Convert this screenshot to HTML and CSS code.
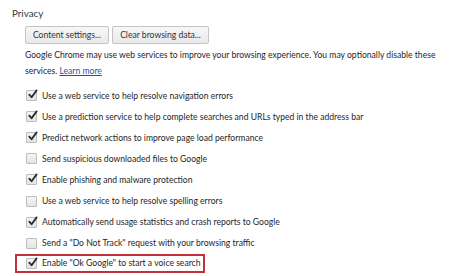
FILE: index.html
```html
<!DOCTYPE html>
<html>
<head>
<meta charset="utf-8">
<link rel="stylesheet" href="styles.css">
</head>
<body>
<section class="privacy">
  <h3 class="title">Privacy</h3>
  <div class="indent">
    <div class="buttons">
      <button class="btn btn-content">Content settings...</button>
      <button class="btn btn-clear">Clear browsing data...</button>
    </div>
    <p class="desc">Google Chrome may use web services to improve your browsing experience. You may optionally disable these services. <a class="link" href="#">Learn more</a></p>
    <ul class="options">
      <li class="opt"><span class="cb on"><svg viewBox="0 0 12 12"><path d="M2.5 6.2 L5 9 L10.5 1.5" /></svg></span>Use a web service to help resolve navigation errors</li>
      <li class="opt"><span class="cb on"><svg viewBox="0 0 12 12"><path d="M2.5 6.2 L5 9 L10.5 1.5" /></svg></span>Use a prediction service to help complete searches and URLs typed in the address bar</li>
      <li class="opt"><span class="cb on"><svg viewBox="0 0 12 12"><path d="M2.5 6.2 L5 9 L10.5 1.5" /></svg></span>Predict network actions to improve page load performance</li>
      <li class="opt"><span class="cb"></span>Send suspicious downloaded files to Google</li>
      <li class="opt"><span class="cb on"><svg viewBox="0 0 12 12"><path d="M2.5 6.2 L5 9 L10.5 1.5" /></svg></span>Enable phishing and malware protection</li>
      <li class="opt"><span class="cb"></span>Use a web service to help resolve spelling errors</li>
      <li class="opt"><span class="cb on"><svg viewBox="0 0 12 12"><path d="M2.5 6.2 L5 9 L10.5 1.5" /></svg></span>Automatically send usage statistics and crash reports to Google</li>
      <li class="opt"><span class="cb"></span>Send a "Do Not Track" request with your browsing traffic</li>
      <li class="opt highlight"><span class="cb on"><svg viewBox="0 0 12 12"><path d="M2.5 6.2 L5 9 L10.5 1.5" /></svg></span>Enable "Ok Google" to start a voice search</li>
    </ul>
  </div>
</section>
</body>
</html>
```

FILE: styles.css
```css
html, body {
  margin: 0;
  padding: 0;
  background: #ffffff;
}
body {
  font-family: Lato, "Open Sans", sans-serif;
  font-size: 8.6px;
  color: #262626;
  width: 450px;
  height: 276px;
  overflow: hidden;
}
.privacy {
  padding: 4px 0 0 12px;
}
.title {
  margin: 0;
  font-size: 9.8px;
  font-weight: normal;
  color: #303942;
  line-height: 18px;
}
.indent {
  padding-left: 13px;
}
.buttons {
  display: flex;
  gap: 3px;
  margin-top: 4px;
}
.btn {
  height: 18px;
  padding: 0;
  font-family: inherit;
  font-size: 8.6px;
  color: #333;
  border: 1px solid #c4c4c4;
  border-radius: 2px;
  background: linear-gradient(#f7f7f7, #e9e9e9);
  line-height: 16px;
  white-space: nowrap;
}
.btn-content { width: 84px; }
.btn-clear { width: 97px; }
.desc {
  margin: 3px 0 0 0;
  width: 422px;
  line-height: 16px;
}
.link {
  color: #1f53a8;
  text-decoration: underline;
}
.options {
  list-style: none;
  margin: 6px 0 0 0;
  padding: 0;
}
.opt {
  display: flex;
  align-items: center;
  height: 21.1px;
  white-space: nowrap;
}
.cb {
  box-sizing: border-box;
  width: 11px;
  height: 11px;
  margin: 0 5px 0 1px;
  border: 1px solid #bdbdbd;
  border-radius: 1px;
  background: linear-gradient(#f4f4f4, #e4e4e4);
  position: relative;
  flex: none;
}
.cb svg {
  position: absolute;
  left: 0;
  top: -2px;
  width: 11px;
  height: 11px;
}
.cb svg path {
  fill: none;
  stroke: #2a2a2a;
  stroke-width: 2;
  stroke-linecap: round;
  stroke-linejoin: round;
}
.highlight {
  margin-left: -10px;
  width: 190px;
  height: 19px;
  box-sizing: border-box;
  border: 2px solid #c2303a;
  padding-left: 8px;
  margin-top: 0;
}
```
